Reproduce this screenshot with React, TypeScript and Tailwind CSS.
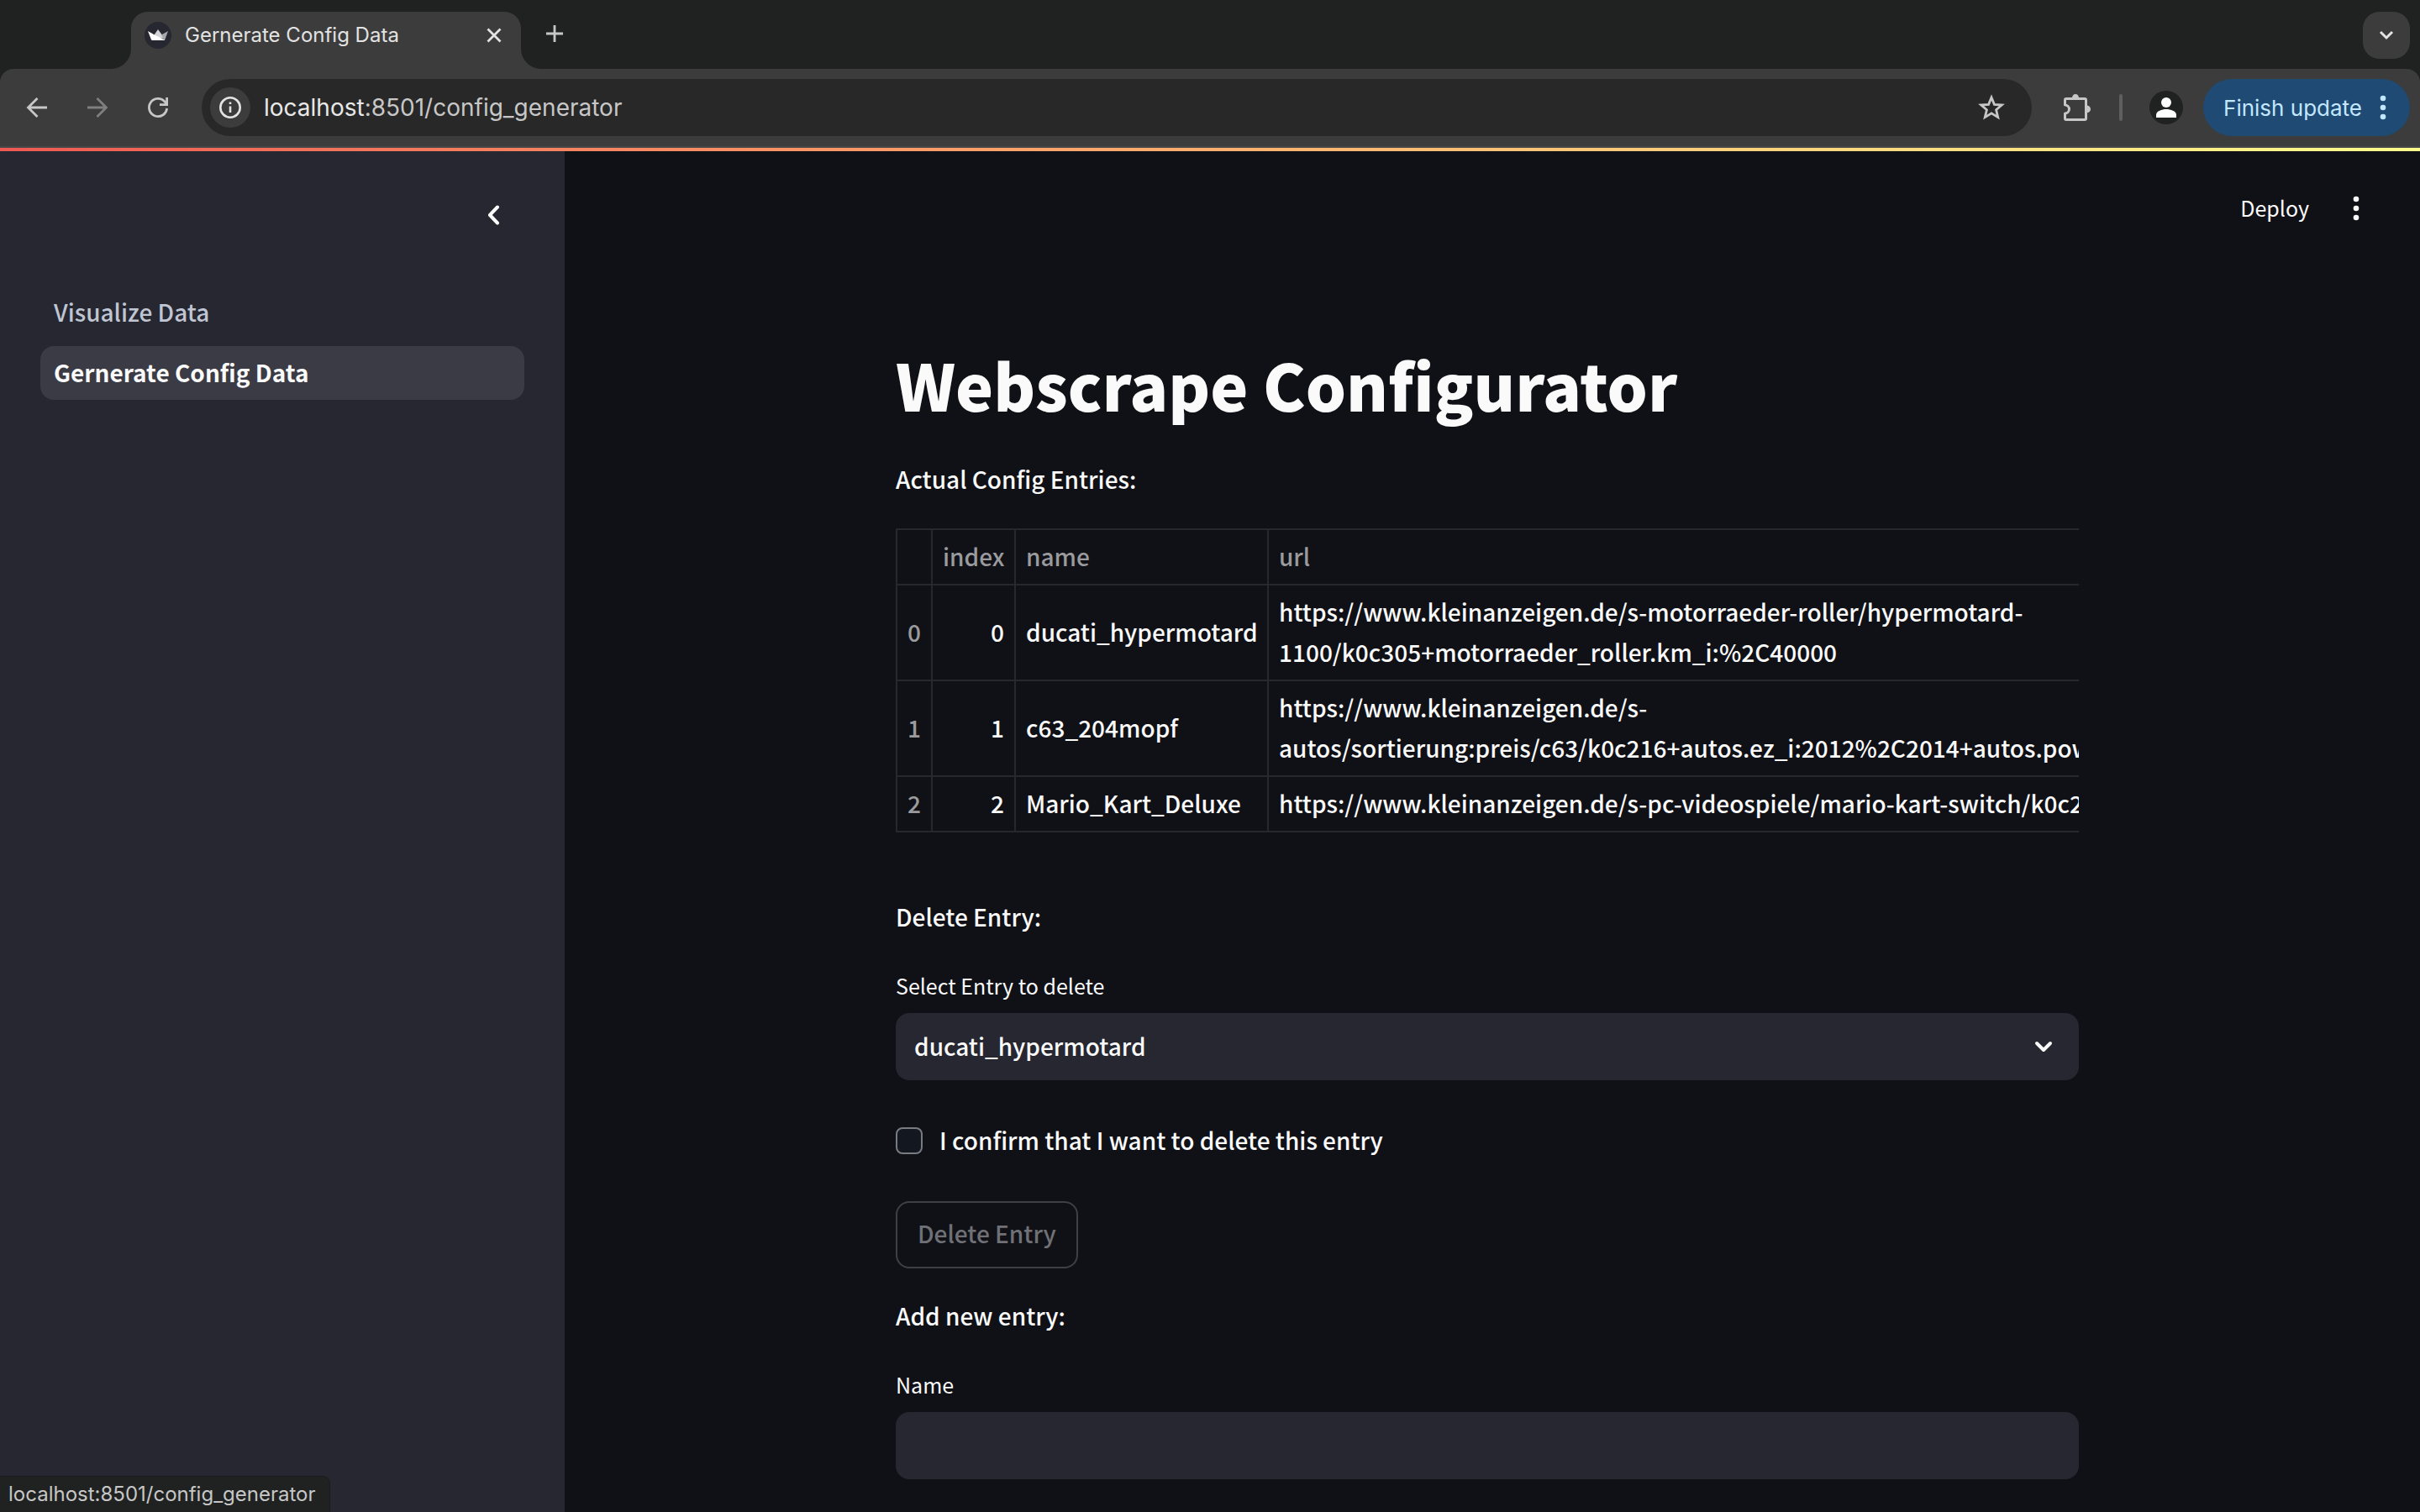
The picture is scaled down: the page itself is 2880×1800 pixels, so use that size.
import { useState } from "react";

const ENTRIES = [
  { name: "ducati_hypermotard", url: "https://www.kleinanzeigen.de/s-motorraeder-roller/hypermotard-1100/k0c305+motorraeder_roller.km_i:%2C40000" },
  { name: "c63_204mopf", url: "https://www.kleinanzeigen.de/s-autos/sortierung:preis/c63/k0c216+autos.ez_i:2012%2C2014+autos.power_i:400" },
  { name: "Mario_Kart_Deluxe", url: "https://www.kleinanzeigen.de/s-pc-videospiele/mario-kart-switch/k0c227" },
];

function Favicon() {
  return (
    <svg viewBox="0 0 32 32" className="size-8 shrink-0" aria-hidden="true">
      <circle cx="16" cy="16" r="16" fill="#262730" />
      <path d="M11.500 15.500 L16 9 L20.500 15 L24 20 L16 19 Z" fill="#d4d4d6" />
      <path d="M28 11 L20 15.500 L23.500 22 L24.200 21.500 Z" fill="#a8a8ac" />
      <path d="M4 11 L11.500 15.200 L24 21.400 Q23.600 22 23 22 H9 Q8.400 22 8 21.300 Z" fill="#fff" />
    </svg>
  );
}

function Dots({ className }: { className: string }) {
  return (
    <svg viewBox="0 0 8 32" className={className} fill="currentColor" aria-hidden="true">
      <circle cx="4" cy="5" r="3.300" />
      <circle cx="4" cy="16" r="3.300" />
      <circle cx="4" cy="27" r="3.300" />
    </svg>
  );
}

function TabStrip() {
  return (
    <div className="flex h-[82px] items-end justify-between bg-[#202221] pr-3">
      <div className="flex items-end">
        <svg viewBox="0 0 24 24" className="ml-[132px] size-6" aria-hidden="true">
          <path d="M24 0 A24 24 0 0 1 0 24 H24 Z" fill="#3c3c3c" />
        </svg>
        <div className="flex h-[68px] w-[464px] items-center rounded-t-[20px] bg-[#3c3c3c] pr-5 pb-3 pl-4">
          <Favicon />
          <span className="ml-4 flex-1 text-2xl text-[#e3e3e3]">Gernerate Config Data</span>
          <button aria-label="Close tab" className="text-[#e3e3e3]">
            <svg viewBox="0 0 24 24" className="size-6" fill="none" stroke="currentColor" strokeWidth="2.800" aria-hidden="true">
              <path d="M4.500 4.500 L19.500 19.500 M19.500 4.500 L4.500 19.500" />
            </svg>
          </button>
        </div>
        <svg viewBox="0 0 24 24" className="size-6" aria-hidden="true">
          <path d="M0 0 A24 24 0 0 0 24 24 H0 Z" fill="#3c3c3c" />
        </svg>
        <button aria-label="New tab" className="mb-[30px] ml-1 text-[#c7c7c7]">
          <svg viewBox="0 0 24 24" className="size-6" fill="none" stroke="currentColor" strokeWidth="2.800" aria-hidden="true">
            <path d="M12 2 V22 M2 12 H22" />
          </svg>
        </button>
      </div>
      <button aria-label="Search tabs" className="mb-3 flex size-14 items-center justify-center rounded-[20px] bg-[#3c3c3c] text-[#e3e3e3]">
        <svg viewBox="0 0 20 12" className="h-3 w-5" fill="none" stroke="currentColor" strokeWidth="3" aria-hidden="true">
          <path d="M3 2 L10 9 L17 2" />
        </svg>
      </button>
    </div>
  );
}

function Toolbar() {
  return (
    <div className="bg-[#202221]">
      <div className="flex h-[94px] items-center rounded-t-2xl border-b-2 border-[#474747] bg-[#3c3c3c] pr-3 pl-7">
        <div className="flex gap-10 text-[#c7c7c7]">
          <button aria-label="Back">
            <svg viewBox="0 0 32 32" className="size-8" fill="none" stroke="currentColor" strokeWidth="2.800" aria-hidden="true">
              <path d="M28 16 H6 M16.500 5 L5.500 16 L16.500 27" />
            </svg>
          </button>
          <button aria-label="Forward" className="text-[#7f7f7f]">
            <svg viewBox="0 0 32 32" className="size-8" fill="none" stroke="currentColor" strokeWidth="2.800" aria-hidden="true">
              <path d="M4 16 H26 M15.500 5 L26.500 16 L15.500 27" />
            </svg>
          </button>
          <button aria-label="Reload">
            <svg viewBox="0 0 32 32" className="size-8" fill="none" stroke="currentColor" strokeWidth="2.800" aria-hidden="true">
              <path d="M26.600 17 A10.600 10.600 0 1 1 24 9 L26.600 12.500" />
              <path d="M26.600 4 V12.600 H18" />
            </svg>
          </button>
        </div>
        <div className="ml-9 flex h-[68px] flex-1 items-center rounded-full bg-[#282828] pr-8 pl-[10px]">
          <button aria-label="Site information" className="flex size-12 items-center justify-center rounded-full bg-[#3c3c3c] text-[#e3e3e3]">
            <svg viewBox="0 0 28 28" className="size-7" fill="none" stroke="currentColor" strokeWidth="2.600" aria-hidden="true">
              <circle cx="14" cy="14" r="11.700" />
              <path d="M14 12.500 V20" />
              <path d="M14 7.500 V10" />
            </svg>
          </button>
          <span className="ml-4 flex-1 text-[28px] text-[#c7c7c7]">
            <span className="text-[#e8e8e8]">localhost</span>:8501/config_generator
          </span>
          <button aria-label="Bookmark this tab" className="text-[#c7c7c7]">
            <svg viewBox="0 0 32 32" className="size-8" fill="none" stroke="currentColor" strokeWidth="2.800" aria-hidden="true">
              <path d="M16 4 L19.400 12.300 L28.400 13 L21.600 18.800 L23.700 27.600 L16 22.900 L8.300 27.600 L10.400 18.800 L3.600 13 L12.600 12.300 Z" />
            </svg>
          </button>
        </div>
        <button aria-label="Extensions" className="ml-[38px] text-[#c7c7c7]">
          <svg viewBox="0 0 32 32" className="size-8" aria-hidden="true">
            <path d="M1.500 13 V7 Q1.500 5.500 3 5.500 H25 Q26.500 5.500 26.500 7 V29 Q26.500 30.500 25 30.500 H3 Q1.500 30.500 1.500 29 V23 A5 5 0 0 0 1.500 13 Z" fill="none" stroke="currentColor" strokeWidth="3" strokeLinejoin="round" />
            <path d="M10 4.500 A4 4.500 0 0 1 18 4.500 Z M27.500 13.600 A4.500 4.300 0 0 1 27.500 22.200 Z" fill="currentColor" />
            <path d="M0 14.700 L1 14.700 A3.500 3.500 0 0 1 1 21.300 L0 21.300 Z" fill="#3c3c3c" />
          </svg>
        </button>
        <div className="ml-[34px] h-8 w-1 rounded-full bg-[#5f5f5f]" />
        <button aria-label="Profile" className="ml-8">
          <svg viewBox="0 0 40 40" className="size-10" aria-hidden="true">
            <circle cx="20" cy="20" r="20" fill="#202221" />
            <circle cx="20" cy="14" r="6" fill="#fff" />
            <path d="M8 32 V29 C8 24 15 22 20 22 C25 22 32 24 32 29 V32 Z" fill="#fff" />
          </svg>
        </button>
        <button className="ml-6 flex h-[68px] items-center gap-[21px] rounded-full bg-[#1f4a73] pr-7 pl-6 text-[26px] text-[#c2e7ff]">
          Finish update
          <Dots className="h-8 w-2" />
        </button>
      </div>
    </div>
  );
}

function Sidebar() {
  return (
    <aside className="w-[672px] shrink-0 bg-[#262730] px-12">
      <div className="flex h-[152px] items-center justify-end pr-5">
        <button aria-label="Collapse sidebar" className="text-[#fafafa]">
          <svg viewBox="0 0 32 32" className="size-8" fill="none" stroke="currentColor" strokeWidth="4" strokeLinecap="round" strokeLinejoin="round" aria-hidden="true">
            <path d="M20 6.500 L11 16 L20 25.500" />
          </svg>
        </button>
      </div>
      <nav className="mt-2 flex flex-col gap-2 text-[28px] leading-[48px]">
        <a href="#visualize" className="rounded-2xl px-4 pt-[7px] pb-[9px] font-medium text-[#bfc5d3]">Visualize Data</a>
        <a href="#generate" className="rounded-2xl bg-[#3b3b45] px-4 pt-[7px] pb-[9px] font-bold text-[#fafafa]">Gernerate Config Data</a>
      </nav>
    </aside>
  );
}

function EntryTable() {
  return (
    <div className="mt-[33px] overflow-hidden">
      <table className="w-[1600px] table-fixed border-collapse border-2 border-[#27282d] leading-[48px] [&_td]:border-2 [&_td]:border-[#27282d] [&_td]:px-3 [&_td]:pt-[7px] [&_td]:pb-[9px] [&_th]:border-2 [&_th]:border-[#27282d] [&_th]:px-3 [&_th]:pt-[7px] [&_th]:pb-[9px] [&_th]:font-medium [&_th]:text-[#9b9b9e]">
        <colgroup>
          <col className="w-[42px]" />
          <col className="w-[99px]" />
          <col className="w-[301px]" />
          <col />
        </colgroup>
        <thead>
          <tr className="text-left">
            <th aria-label="row" />
            <th>index</th>
            <th>name</th>
            <th>url</th>
          </tr>
        </thead>
        <tbody>
          {ENTRIES.map((entry, i) => (
            <tr key={entry.name}>
              <th>{i}</th>
              <td className="text-right">{i}</td>
              <td>{entry.name}</td>
              <td>{entry.url}</td>
            </tr>
          ))}
        </tbody>
      </table>
    </div>
  );
}

function Main() {
  const [selected, setSelected] = useState(ENTRIES[0].name);
  const [confirmed, setConfirmed] = useState(false);
  const [name, setName] = useState("");
  return (
    <main className="flex-1 overflow-hidden font-medium">
      <div className="flex h-[136px] items-center justify-end gap-[52px] pr-[72px] text-[25px] font-normal">
        <button>Deploy</button>
        <button aria-label="Menu">
          <Dots className="h-8 w-2" />
        </button>
      </div>
      <div className="mr-3">
        <div className="mx-auto max-w-[1408px] pt-[88px] text-[28px] leading-[52px]">
          <h1 className="text-[76px] leading-[106px] font-black">Webscrape Configurator</h1>
          <p className="mt-[34px]">Actual Config Entries:</p>
          <EntryTable />
          <p className="mt-[74px]">Delete Entry:</p>
          <label htmlFor="entry" className="mt-[35px] block text-[25px] leading-[42px] font-normal">Select Entry to delete</label>
          <div className="relative mt-3">
            <select id="entry" value={selected} onChange={(e) => setSelected(e.target.value)} className="block h-20 w-full appearance-none rounded-2xl bg-[#262730] px-[22px] pb-[2px]">
              {ENTRIES.map((entry) => (
                <option key={entry.name}>{entry.name}</option>
              ))}
            </select>
            <svg viewBox="0 0 32 32" className="pointer-events-none absolute top-6 right-[26px] size-8" fill="none" stroke="currentColor" strokeWidth="4" strokeLinecap="round" strokeLinejoin="round" aria-hidden="true">
              <path d="M8 12 L16 20 L24 12" />
            </svg>
          </div>
          <label className="mt-[46px] flex h-[52px] w-fit items-center gap-5">
            <input type="checkbox" checked={confirmed} onChange={(e) => setConfirmed(e.target.checked)} className="size-8 appearance-none rounded-lg border-2 border-[#7a7b80] bg-[#131720] checked:bg-[#ff4b4b]" />
            <span className="pb-[2px]">I confirm that I want to delete this entry</span>
          </label>
          <button disabled={!confirmed} className="mt-[46px] block h-20 rounded-2xl border-2 border-[#3f4045] px-6 pb-1 text-[#707176]">
            Delete Entry
          </button>
          <p className="mt-[30px]">Add new entry:</p>
          <label htmlFor="name" className="mt-[35px] block text-[25px] leading-[42px] font-normal">Name</label>
          <input id="name" type="text" value={name} onChange={(e) => setName(e.target.value)} className="mt-3 block h-20 w-full rounded-2xl bg-[#262730] px-6" />
        </div>
      </div>
    </main>
  );
}

export default function App() {
  return (
    <div className="relative flex h-screen flex-col overflow-hidden bg-[#101116] font-['Inter',sans-serif] text-[#fafafa]">
      <TabStrip />
      <Toolbar />
      <div className="h-1 shrink-0 bg-linear-to-r from-[#ee5953] to-[#fffd8c]" />
      <div className="flex min-h-0 flex-1 font-['Noto_Sans_CJK_SC',sans-serif]">
        <Sidebar />
        <Main />
      </div>
      <div className="absolute bottom-0 left-0 flex h-[42px] items-center rounded-tr-lg bg-[#202221] pr-4 pl-[10px] text-2xl text-[#c7c7c7] ring-1 ring-[#1a1b1f]">
        localhost:8501/config_generator
      </div>
    </div>
  );
}
